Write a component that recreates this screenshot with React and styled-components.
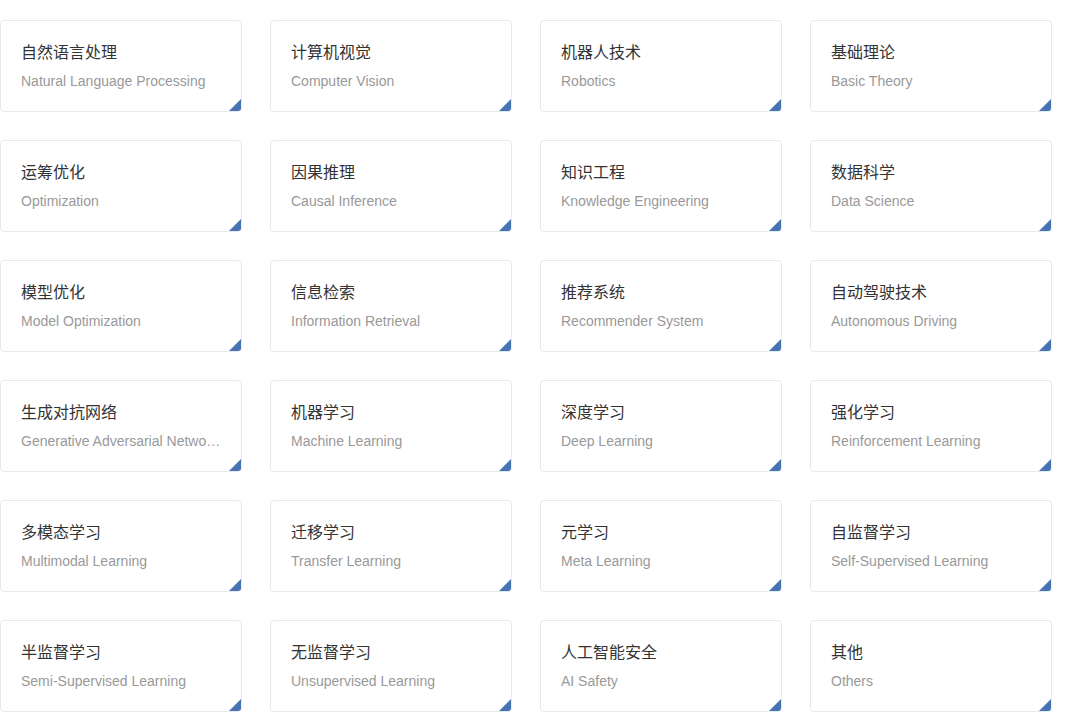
import React from "react";
import styled, { createGlobalStyle } from "styled-components";

const GlobalStyle = createGlobalStyle`
  html, body {
    margin: 0;
    padding: 0;
    background: #fff;
  }
  body {
    font-family: "Liberation Sans", Arial, "Noto Sans CJK SC", sans-serif;
  }
`;

const Grid = styled.div`
  display: grid;
  grid-template-columns: repeat(4, 242px);
  column-gap: 28px;
  row-gap: 28px;
  padding-top: 20px;
`;

const Card = styled.div`
  position: relative;
  box-sizing: border-box;
  height: 92px;
  padding: 22px 20px 0 20px;
  border: 1px solid #e6e9f0;
  border-radius: 4px;
  background: #fff;
  overflow: hidden;
  cursor: pointer;

  &::after {
    content: "";
    position: absolute;
    right: 0;
    bottom: 0;
    width: 0;
    height: 0;
    border-left: 12px solid transparent;
    border-bottom: 12px solid #4673b1;
  }
`;

const Title = styled.div`
  font-family: "Liberation Sans", "Noto Sans CJK SC", sans-serif;
  font-size: 16px;
  line-height: 20px;
  color: #333;
`;

const Subtitle = styled.div`
  margin-top: 9px;
  font-size: 14px;
  line-height: 18px;
  color: #999;
  white-space: nowrap;
  overflow: hidden;
  text-overflow: ellipsis;
`;

const topics = [
  ["自然语言处理", "Natural Language Processing"],
  ["计算机视觉", "Computer Vision"],
  ["机器人技术", "Robotics"],
  ["基础理论", "Basic Theory"],
  ["运筹优化", "Optimization"],
  ["因果推理", "Causal Inference"],
  ["知识工程", "Knowledge Engineering"],
  ["数据科学", "Data Science"],
  ["模型优化", "Model Optimization"],
  ["信息检索", "Information Retrieval"],
  ["推荐系统", "Recommender System"],
  ["自动驾驶技术", "Autonomous Driving"],
  ["生成对抗网络", "Generative Adversarial Networks"],
  ["机器学习", "Machine Learning"],
  ["深度学习", "Deep Learning"],
  ["强化学习", "Reinforcement Learning"],
  ["多模态学习", "Multimodal Learning"],
  ["迁移学习", "Transfer Learning"],
  ["元学习", "Meta Learning"],
  ["自监督学习", "Self-Supervised Learning"],
  ["半监督学习", "Semi-Supervised Learning"],
  ["无监督学习", "Unsupervised Learning"],
  ["人工智能安全", "AI Safety"],
  ["其他", "Others"],
];

const App = () => {
  return (
    <>
      <GlobalStyle />
      <Grid>
        {topics.map(([zh, en]) => (
          <Card key={en}>
            <Title>{zh}</Title>
            <Subtitle>{en}</Subtitle>
          </Card>
        ))}
      </Grid>
    </>
  );
};

export default App;
